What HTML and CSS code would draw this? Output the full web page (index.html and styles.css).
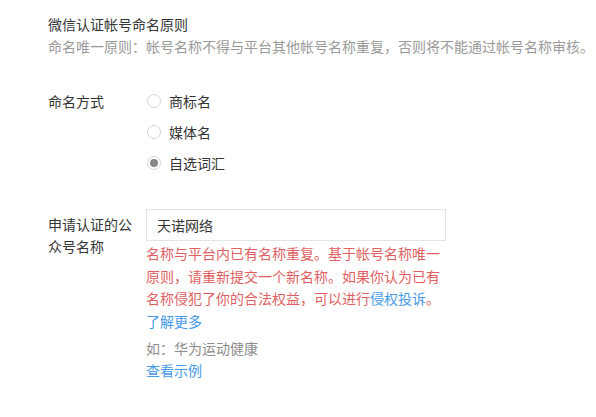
FILE: index.html
```html
<!DOCTYPE html>
<html lang="zh-CN">
<head>
  <meta charset="UTF-8">
  <meta name="viewport" content="width=device-width, initial-scale=1.0">
  <title>微信认证帐号命名</title>
  <link rel="stylesheet" href="styles.css">
</head>
<body>
  <div class="container">
    <div class="intro">
      <h2>微信认证帐号命名原则</h2>
      <p>命名唯一原则：帐号名称不得与平台其他帐号名称重复，否则将不能通过帐号名称审核。</p>
    </div>

    <div class="form-row">
      <div class="form-label">命名方式</div>
      <div class="form-field">
        <label class="radio"><span class="radio-icon"></span>商标名</label>
        <label class="radio"><span class="radio-icon"></span>媒体名</label>
        <label class="radio checked"><span class="radio-icon"></span>自选词汇</label>
      </div>
    </div>

    <div class="form-row name-row">
      <div class="form-label">申请认证的公众号名称</div>
      <div class="form-field">
        <div class="input-box">天诺网络</div>
        <p class="error">名称与平台内已有名称重复。基于帐号名称唯一原则，请重新提交一个新名称。如果你认为已有名称侵犯了你的合法权益，可以进行<a href="#">侵权投诉</a>。</p>
        <a href="#" class="link">了解更多</a>
        <p class="tip">如：华为运动健康</p>
        <a href="#" class="link">查看示例</a>
      </div>
    </div>
  </div>
</body>
</html>
```

FILE: styles.css
```css
body {
  margin: 0;
  font-family: "Noto Sans CJK SC", "Noto Sans", sans-serif;
  font-size: 14px;
  color: #353535;
  background: #fff;
}
.container {
  padding: 13px 0 0 48px;
}
.intro h2 {
  margin: 0;
  font-size: 14px;
  font-weight: normal;
  line-height: 22px;
}
.intro p {
  margin: 0;
  color: #9a9a9a;
  line-height: 22px;
}
.form-row {
  display: flex;
  margin-top: 28px;
}
.form-label {
  width: 85px;
  margin-right: 13px;
  line-height: 22px;
  padding-top: 5px;
}
.form-field {
  width: 300px;
}
.radio {
  display: flex;
  align-items: center;
  height: 31px;
  cursor: pointer;
}
.radio-icon {
  width: 12px;
  height: 12px;
  border: 1px solid #d6d6d6;
  border-radius: 50%;
  margin: 0 8px 0 1px;
  position: relative;
}
.radio.checked .radio-icon::after {
  content: "";
  position: absolute;
  left: 2px;
  top: 2px;
  width: 8px;
  height: 8px;
  border-radius: 50%;
  background: #878787;
}
.name-row {
  margin-top: 31px;
}
.name-row .form-label {
  padding-top: 4px;
}
.input-box {
  box-sizing: border-box;
  height: 32px;
  border: 1px solid #e4e4e4;
  padding: 0 10px;
  line-height: 30px;
}
.error {
  margin: 1px 0 0;
  color: #e15f63;
  line-height: 22.5px;
}
.error a,
.link {
  color: #459ae9;
  text-decoration: none;
}
.link {
  display: block;
  line-height: 22px;
}
.tip {
  margin: 5px 0 0;
  color: #8d8d8d;
  line-height: 22px;
}
```
